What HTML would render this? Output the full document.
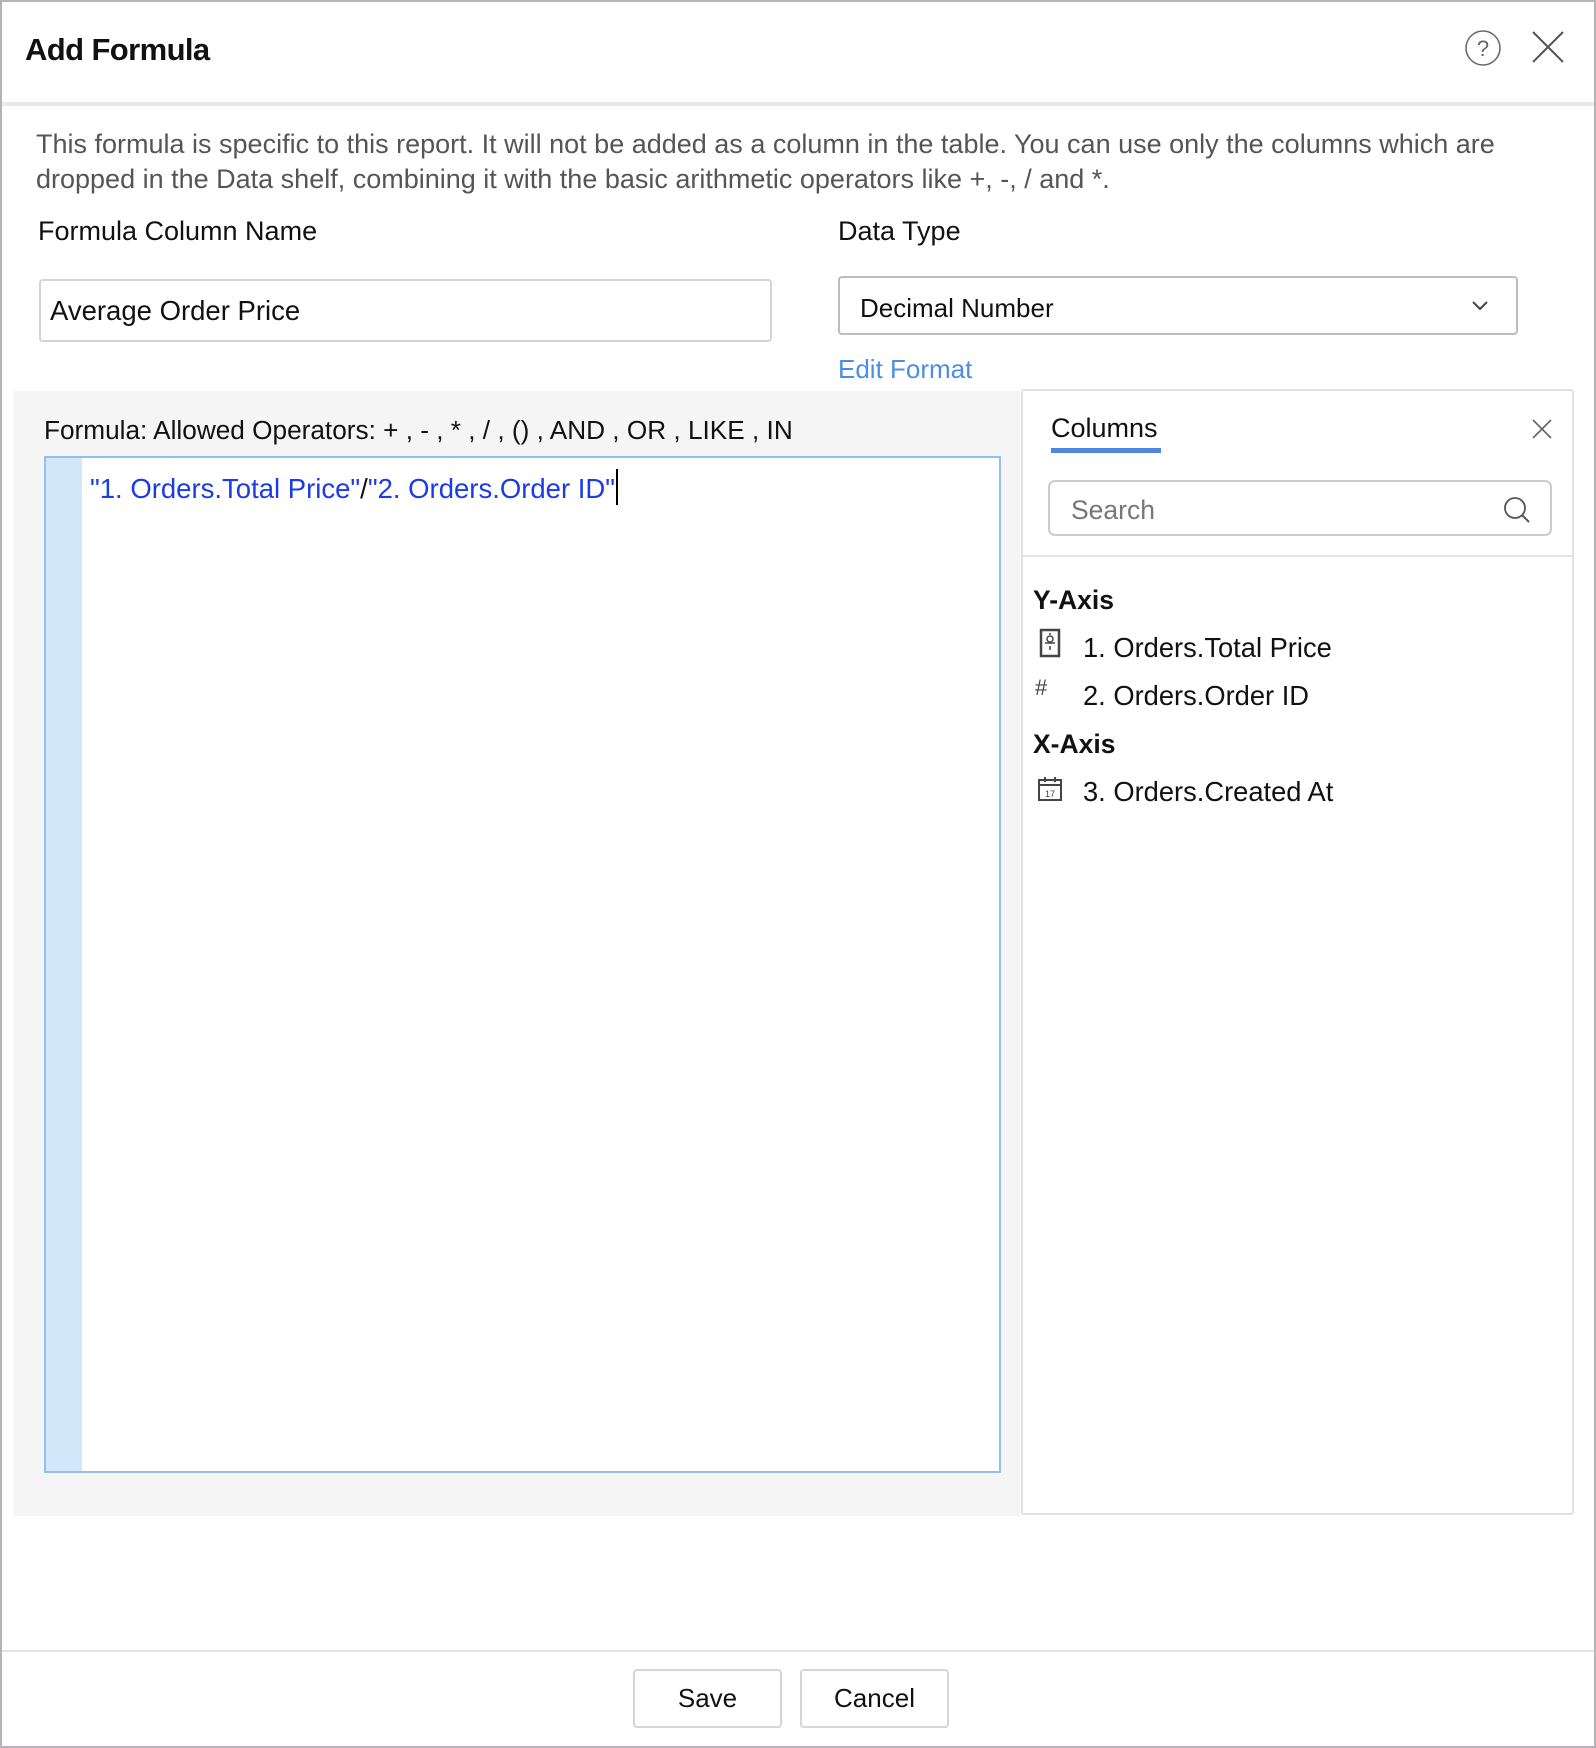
<!DOCTYPE html>
<html><head><meta charset="utf-8"><style>
*{box-sizing:border-box;margin:0;padding:0}
body{width:1596px;height:1748px;position:relative;background:#fff;font-family:"Liberation Sans",sans-serif;color:#111;overflow:hidden}
.a{position:absolute;white-space:nowrap}
.outer{position:absolute;left:0;top:0;width:1596px;height:1748px;border:2px solid #b5b3b5}
</style></head><body>
<div class="outer"></div>
<div class="a" style="left:25px;top:32px;font-size:31px;font-weight:bold;line-height:36px;letter-spacing:-0.6px">Add Formula</div>
<svg class="a" style="left:1464px;top:29px" width="38" height="38" viewBox="0 0 38 38"><circle cx="19" cy="19" r="17" fill="none" stroke="#666" stroke-width="1.5"/><text x="19" y="27" font-size="22" text-anchor="middle" fill="#666" font-family="Liberation Sans">?</text></svg>
<svg class="a" style="left:1531px;top:30px" width="34" height="34" viewBox="0 0 34 34"><path d="M2 2L32 32M32 2L2 32" stroke="#555" stroke-width="2"/></svg>
<div class="a" style="left:2px;top:102px;width:1592px;height:4px;background:#e8e8e8"></div>
<div class="a" style="left:36px;top:127px;font-size:27px;color:#555;line-height:35px">This formula is specific to this report. It will not be added as a column in the table. You can use only the columns which are<br>dropped in the Data shelf, combining it with the basic arithmetic operators like +, -, / and *.</div>
<div class="a" style="left:38px;top:216px;font-size:27px;line-height:30px">Formula Column Name</div>
<div class="a" style="left:838px;top:216px;font-size:27px;line-height:30px">Data Type</div>
<div class="a" style="left:39px;top:279px;width:733px;height:63px;border:2px solid #d4d4d4;border-radius:4px"></div>
<div class="a" style="left:50px;top:296px;font-size:27.5px;line-height:30px">Average Order Price</div>
<div class="a" style="left:838px;top:276px;width:680px;height:59px;border:2px solid #bdbdbd;border-radius:4px"></div>
<div class="a" style="left:860px;top:293px;font-size:26px;line-height:30px">Decimal Number</div>
<svg class="a" style="left:1471px;top:300px" width="18" height="12"><path d="M2 2L9 9L16 2" fill="none" stroke="#444" stroke-width="2"/></svg>
<div class="a" style="left:838px;top:354px;font-size:26px;line-height:30px;color:#4a8ee6">Edit Format</div>
<div class="a" style="left:14px;top:391px;width:1006px;height:1125px;background:#f5f5f5"></div>
<div class="a" style="left:44px;top:415px;font-size:26.2px;line-height:30px">Formula: Allowed Operators: + , - , * , / , () , AND , OR , LIKE , IN</div>
<div class="a" style="left:44px;top:456px;width:957px;height:1017px;background:#fff;border:2px solid #92bfec"></div>
<div class="a" style="left:46px;top:458px;width:36px;height:1013px;background:#d3e7fb"></div>
<div class="a" style="left:90px;top:469px;font-size:27.5px;line-height:30px;color:#1a3be8">"1. Orders.Total Price"<span style="color:#111">/</span>"2. Orders.Order ID"<span style="display:inline-block;width:2px;height:36px;background:#000;vertical-align:-7px;margin-left:1px"></span></div>
<div class="a" style="left:1021px;top:389px;width:553px;height:1126px;background:#fff;border:2px solid #e2e2e2;border-radius:3px"></div>
<div class="a" style="left:1051px;top:413px;font-size:27px;line-height:30px">Columns</div>
<div class="a" style="left:1051px;top:448px;width:110px;height:5px;background:#4f87e0"></div>
<svg class="a" style="left:1531px;top:418px" width="22" height="22"><path d="M2 2L20 20M20 2L2 20" stroke="#666" stroke-width="1.6"/></svg>
<div class="a" style="left:1048px;top:480px;width:504px;height:56px;border:2px solid #ccc;border-radius:7px"></div>
<div class="a" style="left:1071px;top:495px;font-size:26.5px;line-height:30px;color:#777">Search</div>
<svg class="a" style="left:1503px;top:496px" width="28" height="28"><circle cx="12" cy="12" r="10" fill="none" stroke="#555" stroke-width="1.8"/><path d="M19 19L26 26" stroke="#555" stroke-width="2"/></svg>
<div class="a" style="left:1022px;top:555px;width:551px;height:2px;background:#e2e2e2"></div>
<div class="a" style="left:1033px;top:585px;font-size:26.5px;font-weight:bold;line-height:30px">Y-Axis</div>
<svg class="a" style="left:1039px;top:628px" width="22" height="30"><rect x="2" y="2" width="18" height="26" fill="none" stroke="#444" stroke-width="2.5"/><circle cx="11" cy="11" r="3" fill="none" stroke="#444" stroke-width="1.5"/><path d="M6 15H16M11 18V22M11 5V7" stroke="#444" stroke-width="1.5"/></svg>
<div class="a" style="left:1083px;top:633px;font-size:27.3px;line-height:30px">1. Orders.Total Price</div>
<div class="a" style="left:1035px;top:676px;font-size:22px;line-height:24px;color:#444">#</div>
<div class="a" style="left:1083px;top:681px;font-size:27.3px;line-height:30px">2. Orders.Order ID</div>
<div class="a" style="left:1033px;top:729px;font-size:26.5px;font-weight:bold;line-height:30px">X-Axis</div>
<svg class="a" style="left:1037px;top:776px" width="26" height="26"><rect x="2" y="4" width="22" height="20" fill="none" stroke="#444" stroke-width="2"/><path d="M2 9H24M8 1V6M18 1V6" stroke="#444" stroke-width="2"/><text x="13" y="21" font-size="9" text-anchor="middle" fill="#444" font-family="Liberation Sans">17</text></svg>
<div class="a" style="left:1083px;top:777px;font-size:27.3px;line-height:30px">3. Orders.Created At</div>
<div class="a" style="left:2px;top:1650px;width:1592px;height:2px;background:#e4e4e4"></div>
<div class="a" style="left:633px;top:1669px;width:149px;height:59px;border:2px solid #d6d6d6;border-radius:4px;font-size:26px;line-height:55px;text-align:center">Save</div>
<div class="a" style="left:800px;top:1669px;width:149px;height:59px;border:2px solid #d6d6d6;border-radius:4px;font-size:26px;line-height:55px;text-align:center">Cancel</div>
</body></html>
